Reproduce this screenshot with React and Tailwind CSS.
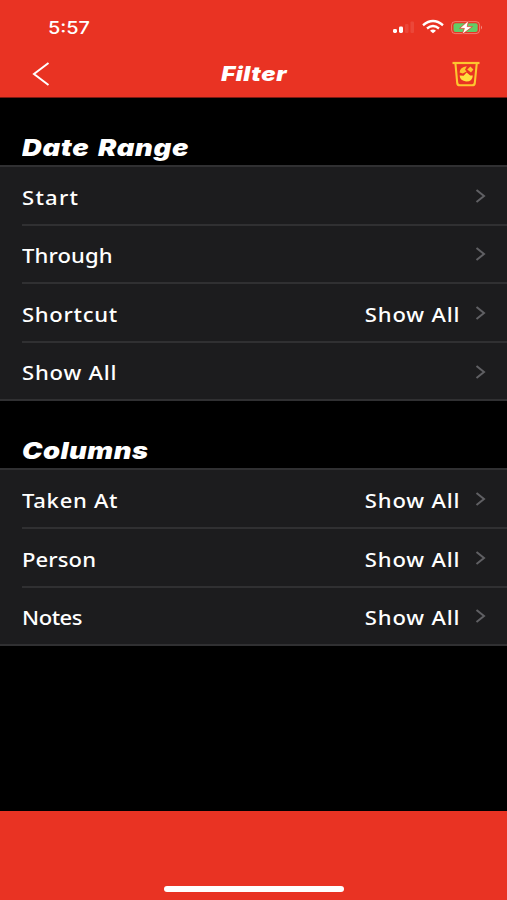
import clsx from 'clsx';

const sections = [
  {
    title: 'Date Range',
    titleClass: 'scale-x-[1.19] tracking-[0.6px]',
    rows: [
      { label: 'Start', labelClass: 'tracking-[1.1px]' },
      { label: 'Through', labelClass: 'tracking-[0.1px]' },
      { label: 'Shortcut', labelClass: 'tracking-[0.6px]', value: 'Show All' },
      { label: 'Show All', labelClass: 'tracking-[0.7px]' },
    ],
  },
  {
    title: 'Columns',
    titleClass: 'scale-x-[1.19] tracking-[0.4px]',
    rows: [
      { label: 'Taken At', labelClass: 'tracking-[0.6px]', value: 'Show All' },
      { label: 'Person', labelClass: 'tracking-[0.1px]', value: 'Show All' },
      { label: 'Notes', labelClass: 'tracking-[-0.4px]', value: 'Show All' },
    ],
  },
];

function StatusIcons() {
  return (
    <svg width="92" height="20" viewBox="0 0 92 20" fill="none">
      {/* signal */}
      <rect x="2" y="12" width="4" height="4" rx="1.4" fill="#fff" />
      <rect x="8" y="9.5" width="4" height="6.5" rx="1.4" fill="#fff" />
      <rect x="14" y="7" width="3.5" height="9" rx="1" fill="#fff" fillOpacity="0.1" />
      <rect x="19.5" y="4.5" width="3.5" height="11.5" rx="1" fill="#fff" fillOpacity="0.1" />
      {/* wifi */}
      <path d="M32 8.2Q42 0 52 8.2" stroke="#fff" strokeWidth="2.4" />
      <path d="M36 11.5Q42 6.6 48 11.5" stroke="#fff" strokeWidth="2.3" />
      <path d="M39 13.7Q42 11.4 45 13.7L42 16.3Z" fill="#fff" />
      {/* battery */}
      <rect x="60.6" y="4.6" width="28" height="12" rx="3.6" stroke="#fff" strokeOpacity="0.35" />
      <rect x="62.5" y="6.2" width="24.2" height="8.8" rx="2" fill="#62cc66" />
      <path d="M90 8.6v4q2-2 0-4" fill="#fff" fillOpacity="0.45" />
      <path d="M77.6 3.4L68.6 11.4H73.4L71 17.6L81.4 9.6H76.2Z" fill="#fff" stroke="#e93323" strokeWidth="0.7" />
    </svg>
  );
}

function CupIcon() {
  return (
    <svg width="28" height="26" viewBox="0 0 28 26" fill="none">
      <path d="M0.5 2H27.5" stroke="#fdc62f" strokeWidth="2.2" />
      <path d="M3.4 2L5.2 22Q5.5 24.3 7.8 24.3H20.2Q22.5 24.3 22.8 22L24.8 2" stroke="#fdc62f" strokeWidth="2.1" />
      <path d="M7.6 11.4Q8 6 14.8 5.2L13 8.8L14.6 10.4L10.8 12.6Z" fill="#fdc62f" />
      <path d="M15.2 8.6L18.4 5.6L21.4 8.4L19 11.6Z" fill="#fdc62f" />
      <path d="M7.6 14.6L11.6 14.8L14.6 11.6L18.2 14.4H20.8Q20.6 20.4 14.2 20.4Q8.2 20.2 7.6 14.6Z" fill="#ffe03e" />
    </svg>
  );
}

function Row({ row, last }) {
  return (
    <div className={clsx('ml-[22px] flex items-center border-[#303032]', last ? 'h-[56.6px]' : 'h-[58.6px] border-b-2')}>
      <span className={clsx('origin-left scale-x-[1.16] pt-[5px] whitespace-nowrap', row.labelClass)}>{row.label}</span>
      <span className="flex-1" />
      {row.value && (
        <span className="mr-[15px] origin-right scale-x-[1.16] pt-[5px] whitespace-nowrap tracking-[0.7px]">{row.value}</span>
      )}
      <svg className="mt-px mr-[21px]" width="11" height="14" viewBox="0 0 11 14" fill="none">
        <path d="M1.5 1L9 7L1.5 13" stroke="#606064" strokeWidth="2" />
      </svg>
    </div>
  );
}

export default function App() {
  return (
    <div className="flex h-[900px] w-[507px] flex-col overflow-hidden bg-black font-['Noto_Sans',sans-serif] text-white">
      <header className="h-[98px] border-b border-[#7b1a12] bg-[#e93323]">
        <div className="flex h-[52px] items-start justify-between pt-[17px] pr-[24px] pl-[48px]">
          <span className="origin-left scale-x-[1.17] font-['Inter',sans-serif] text-[17px] leading-[22px] font-medium">5:57</span>
          <StatusIcons />
        </div>
        <div className="grid h-[44px] grid-cols-3 items-center pr-[27px] pl-[32px]">
          <svg width="18" height="26" viewBox="0 0 18 26" fill="none">
            <path d="M16.5 2L2 13L16.5 24" stroke="#fff" strokeWidth="2" />
          </svg>
          <h1 className="mr-[3px] scale-x-[1.19] text-center font-['Inter',sans-serif] text-[20px] font-black tracking-[0.5px] italic">Filter</h1>
          <div className="flex justify-end"><CupIcon /></div>
        </div>
      </header>

      <main className="flex-1">
        {sections.map(s => (
          <section key={s.title}>
            <h2 className="flex h-[67px] items-end pb-[2px] pl-[22px] font-['Inter',sans-serif] text-[23px] leading-[30px] font-black italic">
              <span className={clsx('origin-left whitespace-nowrap [word-spacing:2px]', s.titleClass)}>{s.title}</span>
            </h2>
            <div className="border-y-2 border-[#303032] bg-[#1c1c1e] text-[19px] font-medium">
              {s.rows.map((row, i) => (
                <Row key={row.label} row={row} last={i === s.rows.length - 1} />
              ))}
            </div>
          </section>
        ))}
      </main>

      <footer className="flex h-[89px] items-end justify-center bg-[#e93323] pb-[8px]">
        <div className="h-[6px] w-[180px] rounded-full bg-white" />
      </footer>
    </div>
  );
}
